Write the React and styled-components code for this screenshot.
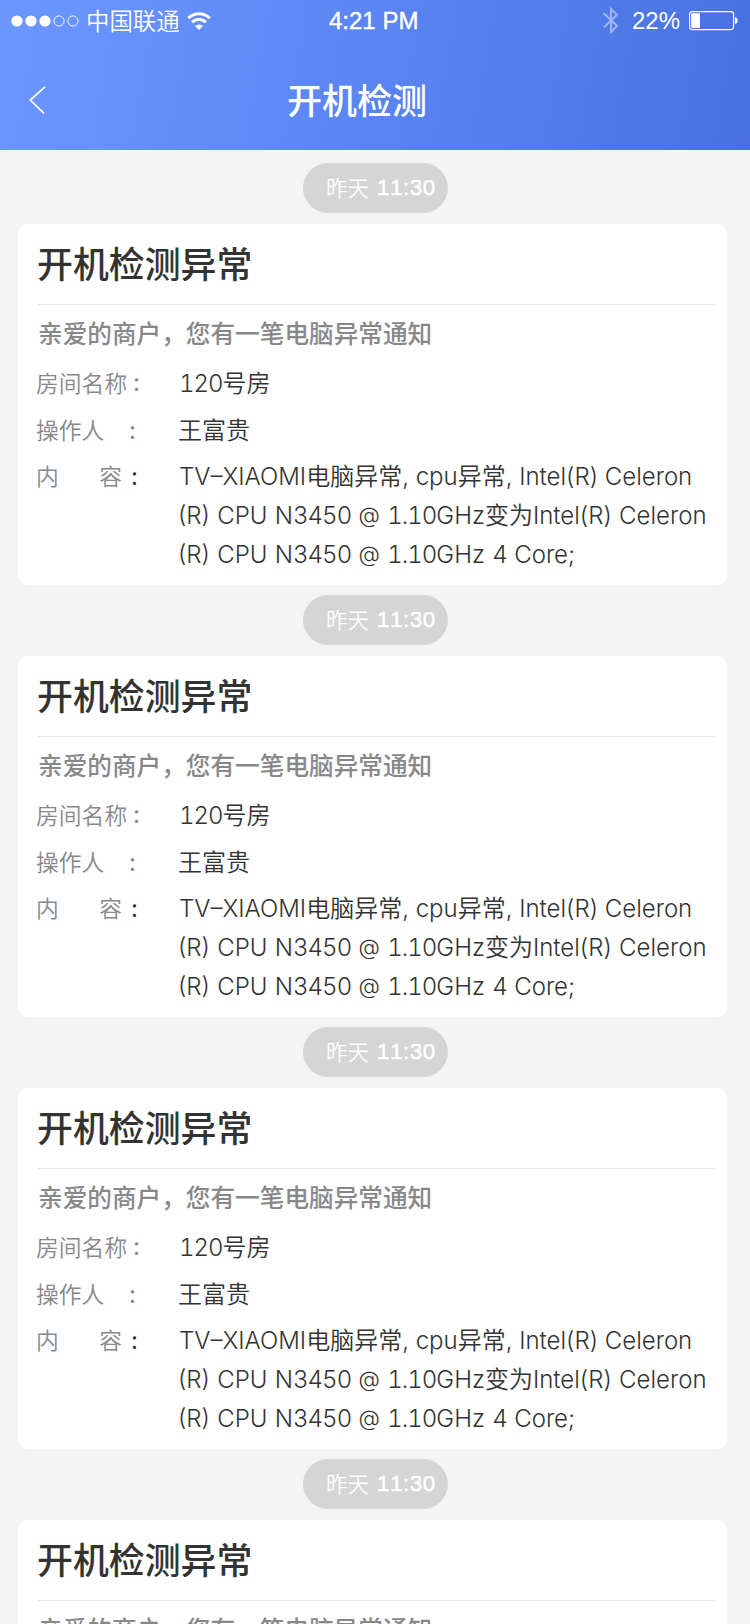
import styled, { createGlobalStyle } from 'styled-components'

const avisos = [1, 2, 3, 4]

export default function App(){
    return(
        <>
        <GlobalStyle/>
        <Page>
            <Header>
                <StatusBar>
                    <Carrier>
                        <Signal/>
                        <Operator>中国联通</Operator>
                        <Wifi/>
                    </Carrier>
                    <Clock>4:21 PM</Clock>
                    <Power>
                        <Bluetooth/>
                        <Percent>22%</Percent>
                        <Battery/>
                    </Power>
                </StatusBar>
                <NavBar>
                    <Back/>
                    <NavTitle>开机检测</NavTitle>
                </NavBar>
            </Header>
            <List>
                {avisos.map(id => <Notice key={id}/>)}
            </List>
        </Page>
        </>
    )
}

function Notice(){
    return(
        <>
        <Time>
            <Day>昨天</Day>
            <Hour>11:30</Hour>
        </Time>
        <Card>
            <Title>开机检测异常</Title>
            <Message>亲爱的商户，您有一笔电脑异常通知</Message>
            <Row $height={48}>
                <Label>房间名称</Label>
                <Colon $left={6}>:</Colon>
                <Value $top={1} $left={1}><Digits>120</Digits>号房</Value>
            </Row>
            <Row $height={46}>
                <Label $up>操作人</Label>
                <Colon $left={2}>:</Colon>
                <Value $top={0} $left={0}>王富贵</Value>
            </Row>
            <Row $height={117}>
                <Label $up $spread><span>内</span><span>容</span></Label>
                <Colon $left={4} $dark>:</Colon>
                <Content>
                    <Line $left={1} $word={0}>TV–XIAOMI电脑异常, cpu异常, Intel(R) Celeron</Line>
                    <Line $word={0.6}><Cpu/>变为Intel(R) Celeron</Line>
                    <Line $word={0.6}><Cpu/> <Digits>4</Digits> Core;</Line>
                </Content>
            </Row>
        </Card>
        </>
    )
}

function Cpu(){
    return(
        <>(R) CPU N<Digits>3450</Digits> <At>@</At> <Digits>1.10</Digits>GHz</>
    )
}

function Signal(){
    return(
        <svg width="68" height="12" viewBox="0 0 68 12">
            <circle cx="6" cy="6" r="5.6" fill="#fff"/>
            <circle cx="20" cy="6" r="5.6" fill="#fff"/>
            <circle cx="34" cy="6" r="5.6" fill="#fff"/>
            <circle cx="48" cy="6" r="5.1" fill="none" stroke="#fff" strokeWidth="0.9"/>
            <circle cx="62" cy="6" r="5.1" fill="none" stroke="#fff" strokeWidth="0.9"/>
        </svg>
    )
}

function Wifi(){
    return(
        <svg width="24" height="18" viewBox="0 0 24 18" fill="none" stroke="#fff" strokeWidth="3">
            <path d="M1.3 6.2a15.2 15.2 0 0 1 21.4 0"/>
            <path d="M5.1 10.3a9.8 9.8 0 0 1 13.8 0"/>
            <path d="M8 14a5.8 5.8 0 0 1 8 0L12 18z" fill="#fff" stroke="none"/>
        </svg>
    )
}

function Bluetooth(){
    return(
        <svg width="15" height="27" viewBox="0 0 15 27" fill="none" stroke="#fff" strokeOpacity="0.45" strokeWidth="2">
            <path d="M0.7 6.2 L14 19 L8 25 V2 L14 7.8 L0.7 20.6"/>
        </svg>
    )
}

function Battery(){
    return(
        <svg width="49" height="20" viewBox="0 0 49 20">
            <rect x="0.6" y="0.6" width="44" height="18" rx="2.5" fill="none" stroke="#fff" strokeWidth="1.1"/>
            <rect x="2.2" y="2.2" width="8.8" height="14.8" rx="1" fill="#fff"/>
            <path d="M46 6 C49.6 7 49.6 12 46 13z" fill="#fff"/>
        </svg>
    )
}

function Back(){
    return(
        <svg width="17" height="28" viewBox="0 0 17 28" fill="none" stroke="#fff" strokeWidth="1.7">
            <path d="M16 0.8 L1.3 14 L15 27.3"/>
        </svg>
    )
}

const cjk = `'Noto Sans CJK SC', sans-serif`

const GlobalStyle = createGlobalStyle`
    *{
        box-sizing: border-box;
    }
    body{
        margin: 0;
        background: #F4F4F4;
        overflow: hidden;
    }
`
const Page = styled.div`
    width: 750px;
    height: 1624px;
    overflow: hidden;
    background: #F4F4F4;
    font-family: Inter, ${cjk};
    white-space: nowrap;
`
const Header = styled.header`
    height: 150px;
    color: white;
    background: linear-gradient(100deg, #6C97FF 0%, #5C87F3 45%, #4871DF 100%);
`
const StatusBar = styled.div`
    display: grid;
    grid-template-columns: 329px 1fr auto;
    align-items: center;
    height: 41px;
    padding-right: 12px;
`
const Carrier = styled.div`
    display: flex;
    align-items: center;
    padding-left: 11px;
`
const Operator = styled.span`
    margin: 0 7px 0 7px;
    padding-bottom: 2px;
    font: 350 23.4px/38px ${cjk};
`
const Clock = styled.span`
    font: 24px/40px 'Liberation Sans', sans-serif;
    -webkit-text-stroke: 0.4px white;
`
const Power = styled.div`
    display: flex;
    align-items: center;
`
const Percent = styled.span`
    font: 24px/40px 'Liberation Sans', sans-serif;
    margin: 0 9px 0 14px;
`
const NavBar = styled.div`
    display: grid;
    grid-template-columns: 258px 1fr;
    align-items: center;
    height: 118px;
    padding-left: 29px;
`
const NavTitle = styled.h1`
    margin: 0;
    padding-bottom: 3px;
    font: 500 35px/50px ${cjk};
`
const List = styled.main`
    display: flex;
    flex-direction: column;
    align-items: flex-start;
    padding: 13px 0 0 18px;
`
const Time = styled.div`
    display: flex;
    align-items: center;
    width: 145px;
    height: 50px;
    margin-left: 285px;
    padding-left: 23px;
    border-radius: 25px;
    background: #D5D5D5;
    color: white;
`
const Day = styled.span`
    padding-bottom: 2px;
    font: 350 21.5px/48px ${cjk};
`
const Hour = styled.span`
    margin-left: 8px;
    font: 22.5px/50px 'Liberation Sans', sans-serif;
    font-kerning: none;
    letter-spacing: 0.5px;
    -webkit-text-stroke: 0.5px white;
`
const Card = styled.section`
    width: 709px;
    height: 361px;
    margin: 11px 0 10px;
    padding: 0 11px 0 20px;
    border-radius: 10px;
    background: white;
`
const Title = styled.h2`
    height: 81px;
    margin: 0;
    border-bottom: 1px solid #E8E8E8;
    color: #333333;
    font: 500 35.9px/76px ${cjk};
    text-indent: -1px;
`
const Message = styled.p`
    height: 56px;
    margin: 0;
    color: #888888;
    font: 500 24.65px/54px ${cjk};
`
const Row = styled.div`
    display: flex;
    height: ${props => props.$height}px;
    color: #888888;
    line-height: 44px;
`
const Label = styled.div`
    display: flex;
    flex-shrink: 0;
    justify-content: ${props => props.$spread ? 'space-between' : 'flex-start'};
    width: ${props => props.$spread ? 86 : 91}px;
    margin: ${props => props.$up ? -1 : 0}px ${props => props.$spread ? 5 : 0}px 0 -2px;
    font-family: ${cjk};
    font-weight: 350;
    font-size: 22.8px;
`
const Colon = styled.span`
    flex-shrink: 0;
    width: 51px;
    padding-left: ${props => props.$left}px;
    color: ${props => props.$dark ? '#333333' : '#888888'};
    font-size: 24px;
`
const Value = styled.div`
    padding: ${props => props.$top}px 0 0 ${props => props.$left}px;
    color: #333333;
    font-weight: 350;
    font-size: 24px;
`
const Content = styled.div`
    display: flex;
    flex-direction: column;
    padding-top: 2px;
    color: #333333;
    font-weight: 350;
    font-size: 24px;
`
const Line = styled.span`
    height: 39px;
    padding-left: ${props => props.$left || 0}px;
    line-height: 39px;
    word-spacing: ${props => props.$word}px;
`
const Digits = styled.span`
    font-variant-numeric: tabular-nums;
    letter-spacing: -1px;
`
const At = styled.span`
    font-size: 22px;
    line-height: 1;
    vertical-align: 1px;
`
